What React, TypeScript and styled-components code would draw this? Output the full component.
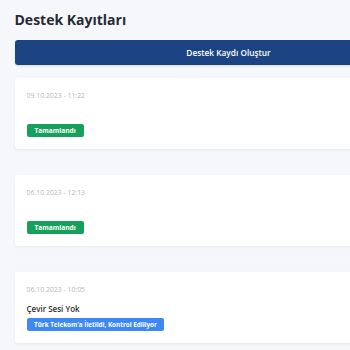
import React from "react";
import styled, { createGlobalStyle } from "styled-components";

const Global = createGlobalStyle`
  html, body { margin: 0; padding: 0; background: #f5f7fb; overflow: hidden; }
  body { font-family: "Open Sans", "Noto Sans", sans-serif; }
`;

const Page = styled.div`
  width: 428px;
  padding: 10px 14px 14px 14.5px;
  display: flex;
  flex-direction: column;
`;

const Title = styled.h1`
  margin: 0;
  font-size: 14px;
  line-height: 20px;
  font-weight: 700;
  color: #262a33;
`;

const CreateButton = styled.button`
  margin-top: 10px;
  height: 25px;
  border: none;
  border-radius: 3px;
  background: #1c4482;
  color: #fff;
  font-family: inherit;
  font-size: 8.3px;
  font-weight: 600;
  box-shadow: 0 1px 2px rgba(0, 0, 0, 0.12);
`;

const List = styled.div`
  margin-top: 13px;
  display: flex;
  flex-direction: column;
  gap: 26px;
`;

const Card = styled.div`
  background: #fff;
  border-radius: 3px;
  padding: 12px 12px 12px 12px;
  box-shadow: 0 1px 3px rgba(30, 40, 70, 0.07);
  display: flex;
  flex-direction: column;
  align-items: flex-start;
`;

const DateText = styled.div`
  font-size: 6.9px;
  line-height: 12px;
  color: #b5b8bd;
`;

const Subject = styled.div`
  margin-top: 7px;
  font-size: 8px;
  line-height: 12px;
  min-height: 12px;
  font-weight: 600;
  color: #2a2d33;
`;

const Badge = styled.span<{ $tone: "green" | "blue" }>`
  margin-top: 3px;
  height: 13px;
  padding: 0 ${(p) => (p.$tone === "green" ? 8 : 7.5)}px;
  border-radius: 2px;
  display: inline-flex;
  align-items: center;
  font-size: ${(p) => (p.$tone === "green" ? 6.6 : 6.3)}px;
  font-weight: 700;
  color: #fff;
  background: ${(p) => (p.$tone === "green" ? "#17a05b" : "#3d88f4")};
`;

const tickets = [
  { date: "09.10.2023 - 11:22", subject: "", status: "Tamamlandı", tone: "green" as const },
  { date: "06.10.2023 - 12:13", subject: "", status: "Tamamlandı", tone: "green" as const },
  { date: "06.10.2023 - 10:05", subject: "Çevir Sesi Yok", status: "Türk Telekom'a İletildi, Kontrol Ediliyor", tone: "blue" as const },
];

export default function App() {
  return (
    <>
      <Global />
      <Page>
        <Title>Destek Kayıtları</Title>
        <CreateButton>Destek Kaydı Oluştur</CreateButton>
        <List>
          {tickets.map((t, i) => (
            <Card key={i}>
              <DateText>{t.date}</DateText>
              <Subject>{t.subject}</Subject>
              <Badge $tone={t.tone}>{t.status}</Badge>
            </Card>
          ))}
        </List>
      </Page>
    </>
  );
}
